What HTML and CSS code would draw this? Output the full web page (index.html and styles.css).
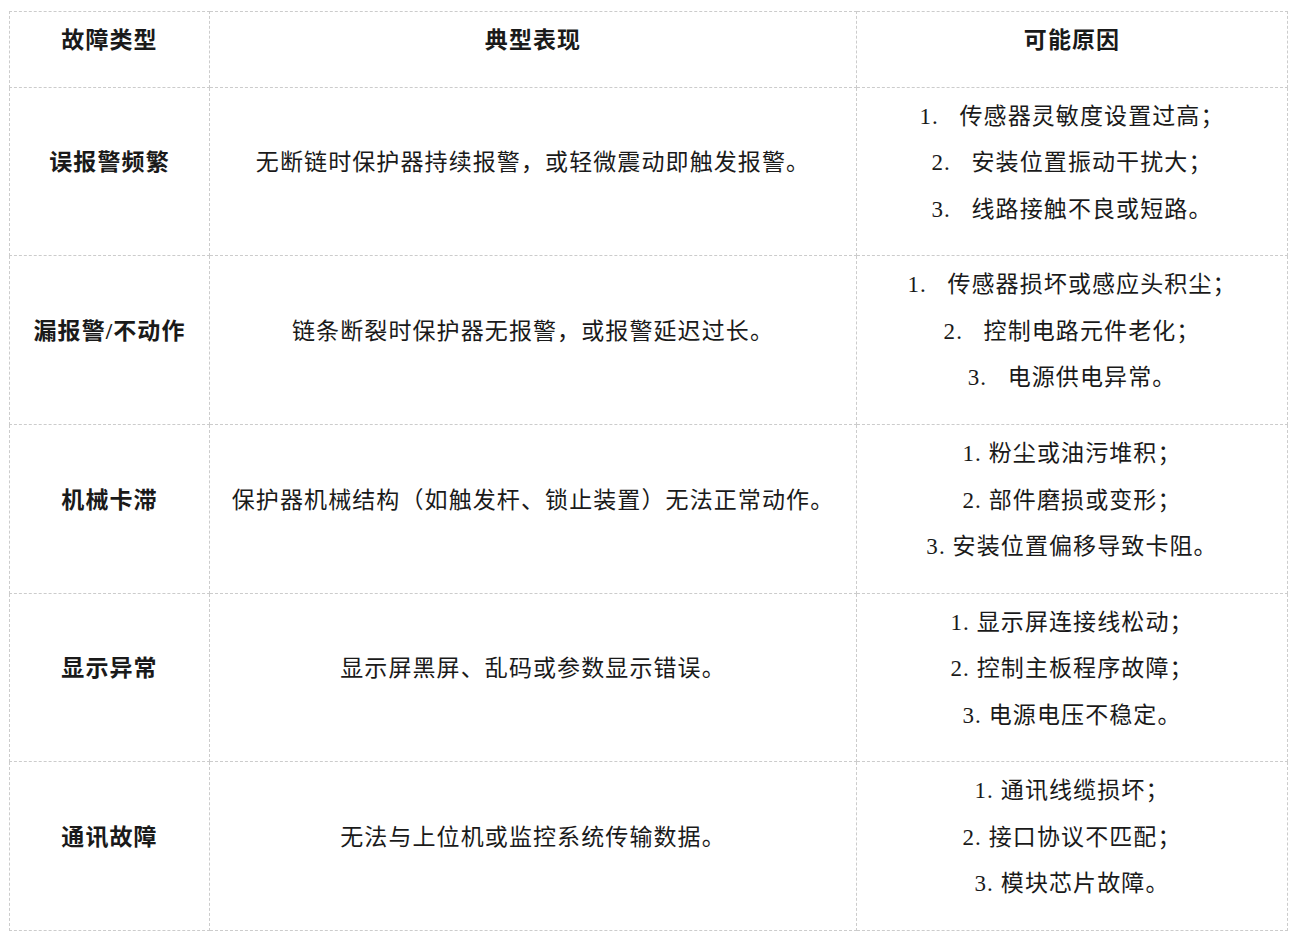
FILE: index.html
```html
<!DOCTYPE html>
<html lang="zh-CN">
<head>
<meta charset="utf-8">
<title>故障类型</title>
<link rel="stylesheet" href="styles.css">
</head>
<body>
<div class="page">
<table class="fault-table">
  <colgroup>
    <col class="c1"><col class="c2"><col class="c3">
  </colgroup>
  <thead>
    <tr><th>故障类型</th><th>典型表现</th><th>可能原因</th></tr>
  </thead>
  <tbody>
    <tr>
      <td class="type">误报警频繁</td>
      <td>无断链时保护器持续报警，或轻微震动即触发报警。</td>
      <td><div>1.&nbsp;&nbsp;&nbsp;传感器灵敏度设置过高；</div><div>2.&nbsp;&nbsp;&nbsp;安装位置振动干扰大；</div><div>3.&nbsp;&nbsp;&nbsp;线路接触不良或短路。</div></td>
    </tr>
    <tr>
      <td class="type">漏报警/不动作</td>
      <td>链条断裂时保护器无报警，或报警延迟过长。</td>
      <td><div>1.&nbsp;&nbsp;&nbsp;传感器损坏或感应头积尘；</div><div>2.&nbsp;&nbsp;&nbsp;控制电路元件老化；</div><div>3.&nbsp;&nbsp;&nbsp;电源供电异常。</div></td>
    </tr>
    <tr>
      <td class="type">机械卡滞</td>
      <td>保护器机械结构（如触发杆、锁止装置）无法正常动作。</td>
      <td><div>1. 粉尘或油污堆积；</div><div>2. 部件磨损或变形；</div><div>3. 安装位置偏移导致卡阻。</div></td>
    </tr>
    <tr>
      <td class="type">显示异常</td>
      <td>显示屏黑屏、乱码或参数显示错误。</td>
      <td><div>1. 显示屏连接线松动；</div><div>2. 控制主板程序故障；</div><div>3. 电源电压不稳定。</div></td>
    </tr>
    <tr>
      <td class="type">通讯故障</td>
      <td>无法与上位机或监控系统传输数据。</td>
      <td><div>1. 通讯线缆损坏；</div><div>2. 接口协议不匹配；</div><div>3. 模块芯片故障。</div></td>
    </tr>
  </tbody>
</table>
</div>
</body>
</html>
```

FILE: styles.css
```css
html, body {
  margin: 0;
  padding: 0;
  background: #ffffff;
}

.page {
  padding: 11px 0 0 9px;
}

.fault-table {
  width: 1278px;
  border-collapse: collapse;
  table-layout: fixed;
  font-family: "Liberation Serif", "Noto Sans CJK SC", serif;
  font-size: 23px;
  letter-spacing: 1.1px;
  color: #1a1a1a;
}

.c1 { width: 200px; }
.c2 { width: 647px; }
.c3 { width: 431px; }

.fault-table th,
.fault-table td {
  border: 1px dashed #cccccc;
  text-align: center;
  vertical-align: middle;
  line-height: 46.5px;
  padding: 6px 4px 22.2px;
}

.fault-table th {
  font-weight: bold;
}

.fault-table td.type {
  font-weight: bold;
}
```
